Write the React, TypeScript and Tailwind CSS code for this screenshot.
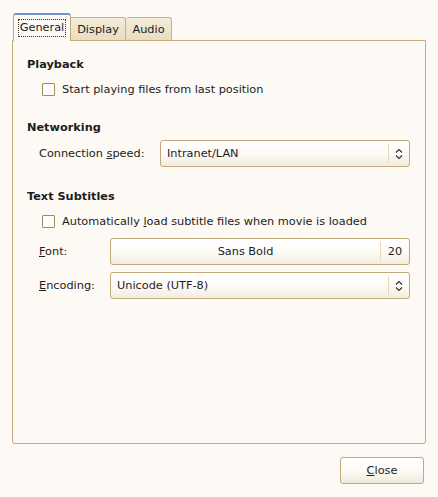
import React from "react";

const Updown = () => (
  <svg width="8" height="12" viewBox="0 0 8 12" className="block">
    <path d="M1 4.5 L4 1.5 L7 4.5" fill="none" stroke="#2e2e2e" strokeWidth="1.1" />
    <path d="M1 7.5 L4 10.5 L7 7.5" fill="none" stroke="#2e2e2e" strokeWidth="1.1" />
  </svg>
);

const Check = ({ label }: { label: React.ReactNode }) => (
  <div className="flex items-center h-[17px]">
    <div className="w-[13px] h-[13px] border border-[#a08a5e] bg-[#fefdfb] rounded-[1px]" />
    <span className="ml-[7px]">{label}</span>
  </div>
);

const Combo = ({ text }: { text: string }) => (
  <div className="flex-1 h-[27px] border border-[#c1a97c] rounded-[3px] bg-gradient-to-b from-[#ffffff] via-[#fdfbf7] to-[#f3ecdf] flex items-center">
    <span className="flex-1 pl-[6px]">{text}</span>
    <div className="w-px h-[19px] bg-[#e6d8b8]" />
    <div className="w-[20px] flex justify-center">
      <Updown />
    </div>
  </div>
);

export default function App() {
  return (
    <div
      className="w-[438px] h-[497px] bg-[#fdfaf5] text-[11.3px] leading-[15px] text-[#1c1c1c] relative overflow-hidden"
      style={{ fontFamily: '"DejaVu Sans", Verdana, sans-serif' }}
    >
      <div className="flex items-end pl-[13px] pt-[13px] h-[41px] relative z-10">
        <div className="w-[58px] h-[28px] border-x border-t-2 border-t-[#6f93c4] border-x-[#c4aa7c] rounded-t-[3px] bg-[#fdfaf5] flex items-center justify-center">
          <span className="border border-dotted border-[#333] px-[1px] leading-[16px]">General</span>
        </div>
        <div className="w-[55px] h-[24px] border-t border-r border-[#c8b088] rounded-tr-[3px] bg-gradient-to-b from-[#f4ecda] to-[#e9ddc1] flex items-center justify-center border-b border-b-[#c4aa7c]">
          Display
        </div>
        <div className="w-[46px] h-[24px] border-t border-r border-[#c8b088] rounded-t-[3px] bg-gradient-to-b from-[#f4ecda] to-[#e9ddc1] flex items-center justify-center border-b border-b-[#c4aa7c]">
          Audio
        </div>
      </div>
      <div className="mx-[12px] -mt-px w-[414px] h-[404px] border border-[#c4aa7c] rounded-b-[3px] pl-[14px] pr-[15px]">
        <div className="font-bold mt-[16px]">Playback</div>
        <div className="mt-[9px] pl-[15px]">
          <Check label="Start playing files from last position" />
        </div>
        <div className="font-bold mt-[22px]">Networking</div>
        <div className="mt-[5px] flex items-center pl-[12px]">
          <span className="w-[121px]">
            Connection <span className="underline">s</span>peed:
          </span>
          <Combo text="Intranet/LAN" />
        </div>
        <div className="font-bold mt-[22px]">Text Subtitles</div>
        <div className="mt-[9px] pl-[15px]">
          <Check
            label={
              <>
                Automatically <span className="underline">l</span>oad subtitle files when movie is loaded
              </>
            }
          />
        </div>
        <div className="mt-[8px] flex items-center pl-[12px]">
          <span className="w-[71px]">
            <span className="underline">F</span>ont:
          </span>
          <div className="flex-1 h-[27px] border border-[#c1a97c] rounded-[3px] bg-gradient-to-b from-[#ffffff] via-[#fdfbf7] to-[#f3ecdf] flex items-center">
            <span className="flex-1 text-center">Sans Bold</span>
            <div className="w-px h-[19px] bg-[#e6d8b8]" />
            <span className="w-[28px] text-center">20</span>
          </div>
        </div>
        <div className="mt-[7px] flex items-center pl-[12px]">
          <span className="w-[71px]">
            <span className="underline">E</span>ncoding:
          </span>
          <Combo text="Unicode (UTF-8)" />
        </div>
      </div>
      <div className="flex justify-end pr-[14px] mt-[13px]">
        <div className="w-[84px] h-[27px] border border-[#c1a97c] rounded-[3px] bg-gradient-to-b from-[#ffffff] via-[#fdfbf7] to-[#f1eadc] flex items-center justify-center">
          <span className="underline">C</span>lose
        </div>
      </div>
    </div>
  );
}
